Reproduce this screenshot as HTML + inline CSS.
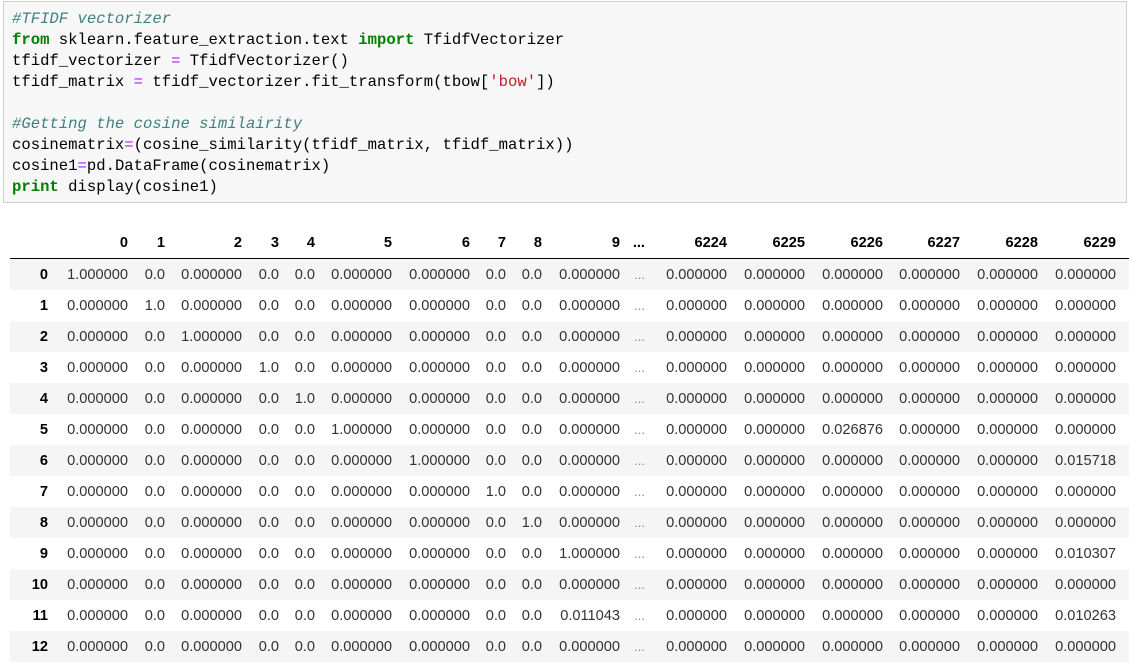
<!DOCTYPE html>
<html><head><meta charset="utf-8"><style>
body{margin:0;background:#fff;width:1129px;height:664px;overflow:hidden;position:relative}
.code{position:absolute;left:3px;top:1px;width:1124px;height:202px;background:#f7f7f7;border:1px solid #cfcfcf;box-sizing:border-box}
pre{margin:0;position:absolute;left:8px;top:7px;font-family:"Liberation Mono",monospace;font-size:15.6px;line-height:21px;color:#000}
.c{color:#408080;font-style:italic}.k{color:#008000;font-weight:bold}.o{color:#aa22ff}.s{color:#ba2121}
table{position:absolute;left:10px;top:228px;border-collapse:collapse;table-layout:fixed;width:1119px;font-family:"Liberation Sans",Arial,sans-serif;font-size:14.6px;color:#333}
td,th{text-align:right;padding:0;height:31px;white-space:nowrap;overflow:visible}
th{font-weight:bold;color:#000}
thead tr{height:30px;border-bottom:1px solid #000}
thead th{height:30px}
tbody tr:nth-child(odd){background:#f5f5f5}
tbody th{color:#000}
td.d{color:#888;font-size:13px}
</style></head><body>
<div class="code"><pre><span class="c">#TFIDF vectorizer</span>
<span class="k">from</span> sklearn.feature_extraction.text <span class="k">import</span> TfidfVectorizer
tfidf_vectorizer <span class="o">=</span> TfidfVectorizer()
tfidf_matrix <span class="o">=</span> tfidf_vectorizer.fit_transform(tbow[<span class="s">'bow'</span>])

<span class="c">#Getting the cosine similairity</span>
cosinematrix<span class="o">=</span>(cosine_similarity(tfidf_matrix, tfidf_matrix))
cosine1<span class="o">=</span>pd.DataFrame(cosinematrix)
<span class="k">print</span> display(cosine1)</pre></div>
<table>
<colgroup><col style="width:38px"><col style="width:80px"><col style="width:37px"><col style="width:77px"><col style="width:37px"><col style="width:36px"><col style="width:77px"><col style="width:78px"><col style="width:36px"><col style="width:36px"><col style="width:78px"><col style="width:25px"><col style="width:82px"><col style="width:78px"><col style="width:78px"><col style="width:77px"><col style="width:78px"><col style="width:78px"><col style="width:13px"></colgroup>
<thead><tr><th></th><th>0</th><th>1</th><th>2</th><th>3</th><th>4</th><th>5</th><th>6</th><th>7</th><th>8</th><th>9</th><th>...</th><th>6224</th><th>6225</th><th>6226</th><th>6227</th><th>6228</th><th>6229</th><th></th></tr></thead>
<tbody>
<tr><th>0</th><td>1.000000</td><td>0.0</td><td>0.000000</td><td>0.0</td><td>0.0</td><td>0.000000</td><td>0.000000</td><td>0.0</td><td>0.0</td><td>0.000000</td><td class="d">...</td><td>0.000000</td><td>0.000000</td><td>0.000000</td><td>0.000000</td><td>0.000000</td><td>0.000000</td><td></td></tr>
<tr><th>1</th><td>0.000000</td><td>1.0</td><td>0.000000</td><td>0.0</td><td>0.0</td><td>0.000000</td><td>0.000000</td><td>0.0</td><td>0.0</td><td>0.000000</td><td class="d">...</td><td>0.000000</td><td>0.000000</td><td>0.000000</td><td>0.000000</td><td>0.000000</td><td>0.000000</td><td></td></tr>
<tr><th>2</th><td>0.000000</td><td>0.0</td><td>1.000000</td><td>0.0</td><td>0.0</td><td>0.000000</td><td>0.000000</td><td>0.0</td><td>0.0</td><td>0.000000</td><td class="d">...</td><td>0.000000</td><td>0.000000</td><td>0.000000</td><td>0.000000</td><td>0.000000</td><td>0.000000</td><td></td></tr>
<tr><th>3</th><td>0.000000</td><td>0.0</td><td>0.000000</td><td>1.0</td><td>0.0</td><td>0.000000</td><td>0.000000</td><td>0.0</td><td>0.0</td><td>0.000000</td><td class="d">...</td><td>0.000000</td><td>0.000000</td><td>0.000000</td><td>0.000000</td><td>0.000000</td><td>0.000000</td><td></td></tr>
<tr><th>4</th><td>0.000000</td><td>0.0</td><td>0.000000</td><td>0.0</td><td>1.0</td><td>0.000000</td><td>0.000000</td><td>0.0</td><td>0.0</td><td>0.000000</td><td class="d">...</td><td>0.000000</td><td>0.000000</td><td>0.000000</td><td>0.000000</td><td>0.000000</td><td>0.000000</td><td></td></tr>
<tr><th>5</th><td>0.000000</td><td>0.0</td><td>0.000000</td><td>0.0</td><td>0.0</td><td>1.000000</td><td>0.000000</td><td>0.0</td><td>0.0</td><td>0.000000</td><td class="d">...</td><td>0.000000</td><td>0.000000</td><td>0.026876</td><td>0.000000</td><td>0.000000</td><td>0.000000</td><td></td></tr>
<tr><th>6</th><td>0.000000</td><td>0.0</td><td>0.000000</td><td>0.0</td><td>0.0</td><td>0.000000</td><td>1.000000</td><td>0.0</td><td>0.0</td><td>0.000000</td><td class="d">...</td><td>0.000000</td><td>0.000000</td><td>0.000000</td><td>0.000000</td><td>0.000000</td><td>0.015718</td><td></td></tr>
<tr><th>7</th><td>0.000000</td><td>0.0</td><td>0.000000</td><td>0.0</td><td>0.0</td><td>0.000000</td><td>0.000000</td><td>1.0</td><td>0.0</td><td>0.000000</td><td class="d">...</td><td>0.000000</td><td>0.000000</td><td>0.000000</td><td>0.000000</td><td>0.000000</td><td>0.000000</td><td></td></tr>
<tr><th>8</th><td>0.000000</td><td>0.0</td><td>0.000000</td><td>0.0</td><td>0.0</td><td>0.000000</td><td>0.000000</td><td>0.0</td><td>1.0</td><td>0.000000</td><td class="d">...</td><td>0.000000</td><td>0.000000</td><td>0.000000</td><td>0.000000</td><td>0.000000</td><td>0.000000</td><td></td></tr>
<tr><th>9</th><td>0.000000</td><td>0.0</td><td>0.000000</td><td>0.0</td><td>0.0</td><td>0.000000</td><td>0.000000</td><td>0.0</td><td>0.0</td><td>1.000000</td><td class="d">...</td><td>0.000000</td><td>0.000000</td><td>0.000000</td><td>0.000000</td><td>0.000000</td><td>0.010307</td><td></td></tr>
<tr><th>10</th><td>0.000000</td><td>0.0</td><td>0.000000</td><td>0.0</td><td>0.0</td><td>0.000000</td><td>0.000000</td><td>0.0</td><td>0.0</td><td>0.000000</td><td class="d">...</td><td>0.000000</td><td>0.000000</td><td>0.000000</td><td>0.000000</td><td>0.000000</td><td>0.000000</td><td></td></tr>
<tr><th>11</th><td>0.000000</td><td>0.0</td><td>0.000000</td><td>0.0</td><td>0.0</td><td>0.000000</td><td>0.000000</td><td>0.0</td><td>0.0</td><td>0.011043</td><td class="d">...</td><td>0.000000</td><td>0.000000</td><td>0.000000</td><td>0.000000</td><td>0.000000</td><td>0.010263</td><td></td></tr>
<tr><th>12</th><td>0.000000</td><td>0.0</td><td>0.000000</td><td>0.0</td><td>0.0</td><td>0.000000</td><td>0.000000</td><td>0.0</td><td>0.0</td><td>0.000000</td><td class="d">...</td><td>0.000000</td><td>0.000000</td><td>0.000000</td><td>0.000000</td><td>0.000000</td><td>0.000000</td><td></td></tr>
</tbody></table>
</body></html>
